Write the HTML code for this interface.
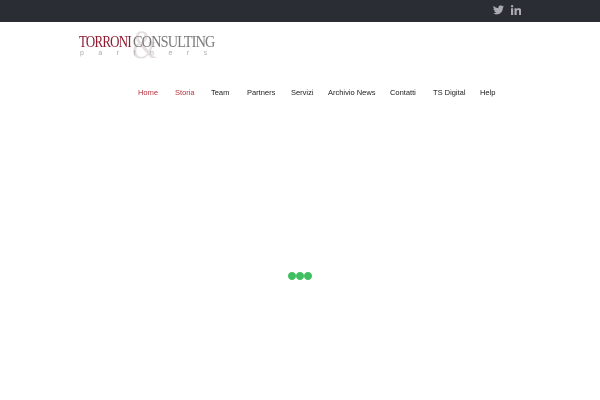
<!DOCTYPE html>
<html><head><meta charset="utf-8"><style>
body{margin:0;width:600px;height:400px;background:#fff;position:relative;overflow:hidden;font-family:"Liberation Sans",sans-serif}
.top{position:absolute;left:0;top:0;width:600px;height:22px;background:#2b2d34}
.nav span{position:absolute;top:88px;font-size:7.5px;color:#222;white-space:nowrap}
.logo{position:absolute;font-family:"Liberation Serif",serif;transform-origin:0 0;white-space:nowrap}
.dot{position:absolute;top:272px;width:8px;height:8px;border-radius:50%;background:#3fbf5f}
</style></head><body>
<div class="top">
<svg style="position:absolute;left:493px;top:5px" width="11" height="10" viewBox="0 0 24 20"><path fill="#a9abb0" d="M24 2.4a10 10 0 0 1-2.8.8A5 5 0 0 0 23.3.4a10 10 0 0 1-3.1 1.2A4.9 4.9 0 0 0 11.8 6 14 14 0 0 1 1.7.9a4.9 4.9 0 0 0 1.5 6.6A4.9 4.9 0 0 1 1 6.9a4.9 4.9 0 0 0 3.9 4.8 5 5 0 0 1-2.2.1 4.9 4.9 0 0 0 4.6 3.4A9.9 9.9 0 0 1 0 17.3 14 14 0 0 0 7.5 19.5c9 0 14-7.5 14-14v-.6A10 10 0 0 0 24 2.4z"/></svg>
<svg style="position:absolute;left:511px;top:5px" width="10" height="10" viewBox="0 0 20 20"><path fill="#a9abb0" d="M0 6.5h4.3V20H0zM2.2 0a2.4 2.4 0 1 1 0 4.8 2.4 2.4 0 0 1 0-4.8zM7 6.5h4.1v1.9c.6-1.1 2-2.2 4.1-2.2 4.4 0 5.2 2.9 5.2 6.6V20h-4.3v-6.5c0-1.6 0-3.6-2.2-3.6s-2.5 1.7-2.5 3.5V20H7z"/></svg>
</div>
<div class="logo" style="left:132px;top:25px;font-size:40px;color:#e6dfe1;line-height:1;transform:scaleX(0.8)">&amp;</div>
<div class="logo" style="left:79px;top:33px;font-size:17px;color:#8e1b30;letter-spacing:-1px;line-height:1;transform:scaleX(0.76)">TORRONI</div>
<div class="logo" style="left:133px;top:33px;font-size:17px;color:#7a7a7a;letter-spacing:-1px;line-height:1;transform:scaleX(0.84)">CONSULTING</div>
<div class="logo" style="left:80px;top:50px;font-size:7px;color:#aaa;letter-spacing:14.5px;line-height:1;font-family:'Liberation Sans',sans-serif">partners</div>
<div class="nav">
<span style="left:138px;color:#b8343f">Home</span>
<span style="left:175px;color:#b8343f">Storia</span>
<span style="left:211px">Team</span>
<span style="left:247px">Partners</span>
<span style="left:291px">Servizi</span>
<span style="left:328px">Archivio News</span>
<span style="left:390px">Contatti</span>
<span style="left:433px">TS Digital</span>
<span style="left:480px">Help</span>
</div>
<div class="dot" style="left:288px"></div>
<div class="dot" style="left:296px"></div>
<div class="dot" style="left:304px"></div>
</body></html>
